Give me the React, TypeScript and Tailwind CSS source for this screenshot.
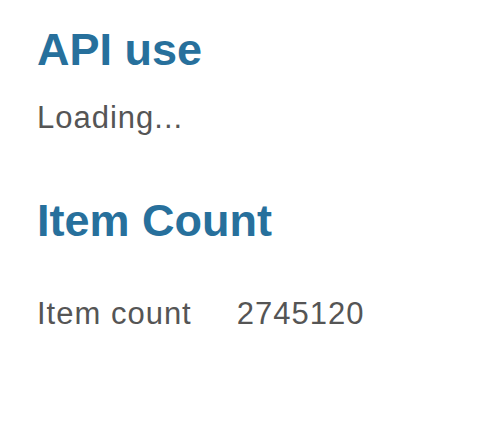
// Simple status screen: API usage + item count.
const heading = "font-['Liberation_Sans',Arial,sans-serif] font-bold text-[#27709c] text-[45px] leading-none";
const body = "font-['Liberation_Sans',Arial,sans-serif] text-[#555555] text-[31px] leading-none tracking-[1px]";

export default function App() {
  return (
    <main className="w-[480px] h-[436px] bg-white px-[37px] pt-[27px]">
      <section>
        <h1 className={heading}>API use</h1>
        <p className={`${body} mt-[30px]`}>Loading...</p>
      </section>

      <section className="mt-[65px]">
        <h2 className={heading}>Item Count</h2>
        <div className={`${body} mt-[55px] flex gap-[45px]`}>
          <span>Item count</span>
          <span>2745120</span>
        </div>
      </section>
    </main>
  );
}
